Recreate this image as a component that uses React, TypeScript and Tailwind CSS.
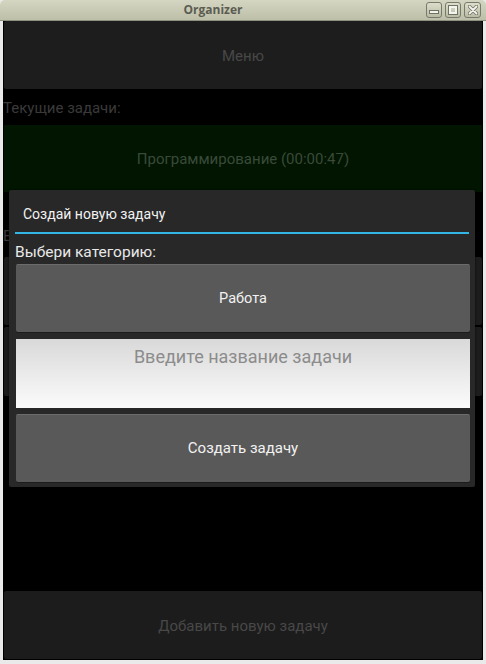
import { Fragment } from "react";

function TitleBar() {
    return (
        <div className="h-[21px] shrink-0 flex items-center rounded-tl-[5px] rounded-tr-[5px] bg-gradient-to-b from-[#d4d6c2] to-[#bdbfa8] border-b border-[#8e9080]">
            <div className="flex-1 text-center pl-[8px] text-[12px] font-bold text-[#5c5d52] font-['Open_Sans',sans-serif] leading-none -translate-x-[4px]">
                Organizer
            </div>
            <div className="flex gap-[3px] pr-[5px]">
                <div className="w-[16px] h-[16px] rounded-[3px] border border-[#77796a] bg-gradient-to-b from-[#dcdecb] to-[#b9bba5] flex items-end justify-center pb-[3px]">
                    <div className="w-[8px] h-[2px] bg-[#f4f4ee] border border-[#6f7163] box-content" />
                </div>
                <div className="w-[16px] h-[16px] rounded-[3px] border border-[#77796a] bg-gradient-to-b from-[#dcdecb] to-[#b9bba5] flex items-center justify-center">
                    <div className="w-[8px] h-[8px] border-2 border-[#f4f4ee] outline outline-1 outline-[#6f7163]" />
                </div>
                <div className="w-[17px] h-[16px] rounded-[3px] border border-[#77796a] bg-gradient-to-b from-[#dcdecb] to-[#b9bba5] flex items-center justify-center">
                    <svg width="10" height="10" viewBox="0 0 10 10">
                        <path d="M1.5 1.5 L8.5 8.5 M8.5 1.5 L1.5 8.5" stroke="#6f7163" strokeWidth="3.4" strokeLinecap="round" />
                        <path d="M1.5 1.5 L8.5 8.5 M8.5 1.5 L1.5 8.5" stroke="#f4f4ee" strokeWidth="1.8" strokeLinecap="round" />
                    </svg>
                </div>
            </div>
        </div>
    )
}

function CreateTaskDialog() {
    return (
        <div className="absolute left-[6px] top-[169px] w-[466px] h-[297px] bg-[#282828] rounded-[2px] flex flex-col shadow-[0_0_2px_rgba(0,0,0,0.8)]">
            <div className="h-[42px] pt-[7px] flex items-center pl-[14px] text-[14px] text-[#f2f2f2]">
                Создай новую задачу
            </div>
            <div className="mx-[6px] h-[2px] bg-[#33b5e5]" />
            <div className="h-[30px] pt-[7px] flex items-center pl-[6px] text-[15.5px] text-[#e8e8e8]">
                Выбери категорию:
            </div>
            <button className="ml-[7px] mr-[5px] h-[68px] bg-[#595959] rounded-[2px] border-t border-[#6c6c6c] text-[14.5px] text-[#f2f2f2] shadow-[0_1px_0_#1c1c1c]">
                Работа
            </button>
            <textarea
                placeholder="Введите название задачи"
                className="ml-[7px] mr-[5px] mt-[7px] h-[69px] resize-none bg-gradient-to-b from-[#d9d9d9] to-[#fbfbfb] text-center pt-[4px] text-[18px] text-[#333] placeholder:text-[#8c8c8c] outline-none"
            />
            <button className="ml-[7px] mr-[5px] mt-[6px] h-[68px] bg-[#595959] rounded-[2px] border-t border-[#6c6c6c] text-[15px] text-[#f2f2f2] shadow-[0_1px_0_#1c1c1c]">
                Создать задачу
            </button>
        </div>
    )
}

export default function App() {
    return (
        <Fragment>
            <div className="w-[486px] h-[664px] bg-[#eaeaea] flex flex-col font-['Roboto',sans-serif] overflow-hidden">
                <TitleBar />
                <div className="relative mx-[3px] mb-[4px] flex-1 bg-black flex flex-col">
                    <div className="mx-px h-[68px] bg-[#1d1d1d] rounded-[2px] flex items-center justify-center pt-[2px] text-[15px] text-[#484848]">
                        Меню
                    </div>
                    <div className="h-[36px] pt-[2px] flex items-center text-[15px] text-[#3a3a3a]">
                        Текущие задачи:
                    </div>
                    <div className="mx-px h-[67px] bg-[#011500] flex items-center justify-center pt-[2px] text-[15px] text-[#3a4a3a]">
                        Программирование (00:00:47)
                    </div>
                    <div className="h-[65px] flex items-end pb-[10px] text-[15px] text-[#3a3a3a]">
                        Выполненные задачи:
                    </div>
                    <div className="mx-px h-[68px] bg-[#1c1c1c] rounded-[2px]" />
                    <div className="mx-px mt-[2px] h-[69px] bg-[#1c1c1c] rounded-[2px]" />
                    {/* кнопка внизу */}
                    <div className="mt-auto mb-px mx-px h-[68px] bg-[#1c1c1c] rounded-[2px] flex items-center justify-center pt-[2px] text-[15px] text-[#484848]">
                        Добавить новую задачу
                    </div>
                    <CreateTaskDialog />
                </div>
            </div>
        </Fragment>
    )
}
